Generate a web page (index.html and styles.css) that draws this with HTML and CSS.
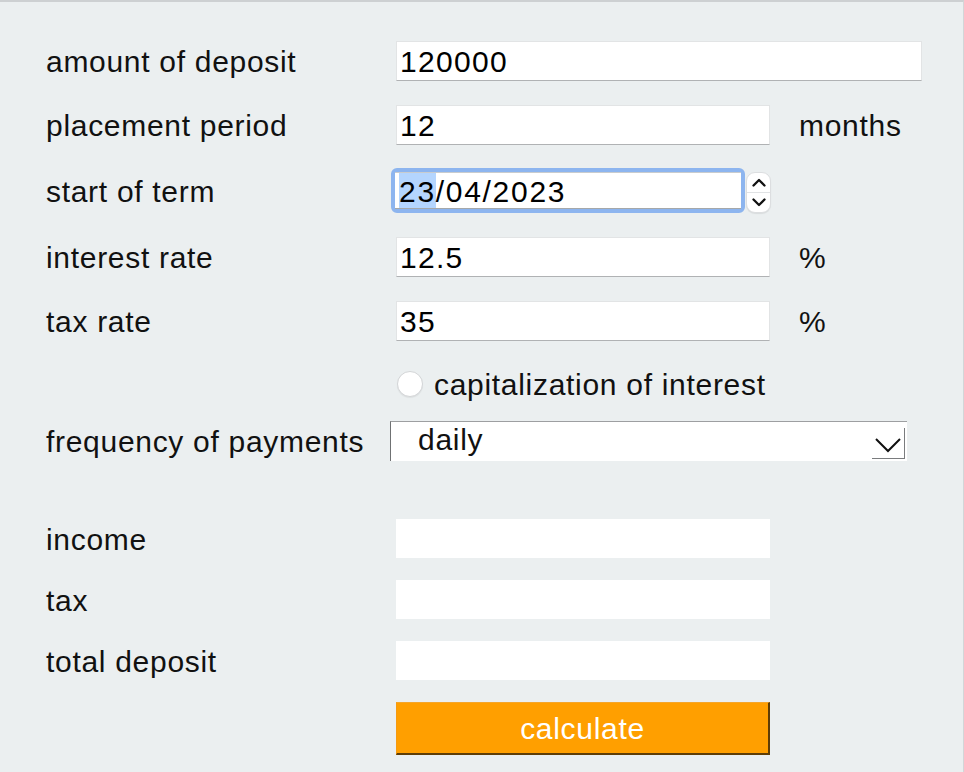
FILE: index.html
```html
<!DOCTYPE html>
<html lang="en">
<head>
<meta charset="utf-8">
<title>Deposit calculator</title>
<link rel="stylesheet" href="styles.css">
</head>
<body>
<main class="calc">
  <div class="row r-first">
    <span class="lbl">amount of deposit</span>
    <input class="field field-wide" type="text" value="120000">
  </div>
  <div class="row r-gap24">
    <span class="lbl">placement period</span>
    <input class="field" type="text" value="12">
    <span class="unit">months</span>
  </div>
  <div class="row r-date">
    <span class="lbl">start of term</span>
    <div class="date-ring">
      <div class="date-box"><span class="sel">23</span>/04/2023</div>
    </div>
    <div class="spinner">
      <svg class="spin-up" width="16" height="11" viewBox="0 0 16 11"><path d="M2.5 8.5 L8 3 L13.5 8.5" fill="none" stroke="#111" stroke-width="2.3" stroke-linecap="round" stroke-linejoin="round"/></svg>
      <svg class="spin-down" width="16" height="11" viewBox="0 0 16 11"><path d="M2.5 2.5 L8 8 L13.5 2.5" fill="none" stroke="#111" stroke-width="2.3" stroke-linecap="round" stroke-linejoin="round"/></svg>
    </div>
  </div>
  <div class="row r-gap24">
    <span class="lbl">interest rate</span>
    <input class="field" type="text" value="12.5">
    <span class="unit">%</span>
  </div>
  <div class="row r-gap24">
    <span class="lbl">tax rate</span>
    <input class="field" type="text" value="35">
    <span class="unit">%</span>
  </div>
  <div class="row r-radio">
    <span class="lbl"></span>
    <span class="radio"></span>
    <span class="radio-text">capitalization of interest</span>
  </div>
  <div class="row r-select">
    <span class="lbl">frequency of payments</span>
    <div class="select">
      <span class="select-text">daily</span>
      <span class="select-arrow">
        <svg width="28" height="18" viewBox="0 0 28 18"><path d="M2 3 L14 15 L26 3" fill="none" stroke="#111" stroke-width="2"/></svg>
      </span>
    </div>
  </div>
  <div class="row r-out-first">
    <span class="lbl">income</span>
    <div class="out"></div>
  </div>
  <div class="row r-out">
    <span class="lbl">tax</span>
    <div class="out"></div>
  </div>
  <div class="row r-out">
    <span class="lbl">total deposit</span>
    <div class="out"></div>
  </div>
  <div class="row r-btn">
    <span class="lbl"></span>
    <button class="btn" type="button">calculate</button>
  </div>
</main>
</body>
</html>
```

FILE: styles.css
```css
html, body {
  margin: 0;
  padding: 0;
  height: 100%;
}
body {
  background: #ebeff0;
  border-top: 2px solid #cdd0d2;
  border-right: 1px solid #d3d6d8;
  box-sizing: border-box;
  font-family: "Liberation Sans", Arial, sans-serif;
  font-size: 30px;
  letter-spacing: 0.7px;
  color: #111;
}
.calc {
  padding: 39px 0 0 46px;
  display: flex;
  flex-direction: column;
}
.row {
  display: flex;
  align-items: center;
  height: 40px;
}
.lbl {
  width: 350px;
  flex: none;
  line-height: 40px;
  padding-top: 2px;
  white-space: nowrap;
}
.r-first { margin-top: 0; }
.r-gap24 { margin-top: 24px; }
.r-date { margin-top: 23px; height: 45px; }
.r-radio { margin-top: 23px; }
.r-select { margin-top: 17px; }
.r-out-first { margin-top: 58px; height: 39px; }
.r-out { margin-top: 22px; height: 39px; }
.r-btn { margin-top: 22px; height: 53px; }

.field {
  box-sizing: border-box;
  width: 374px;
  height: 40px;
  margin: 0;
  padding: 2px 0 0 3px;
  border: 1px solid #e2e4e5;
  border-bottom-color: #b0b2b4;
  background: #fff;
  font-family: inherit;
  font-size: 30px;
  letter-spacing: 1.3px;
  color: #000;
  outline: none;
}
.field-wide { width: 526px; }
.unit {
  margin-left: 29px;
  line-height: 40px;
  padding-top: 2px;
}

.date-ring {
  box-sizing: border-box;
  margin-left: -5px;
  width: 354px;
  height: 45px;
  border: 4px solid #8db5ef;
  border-radius: 6px;
  background: #8db5ef;
  display: flex;
}
.date-box {
  flex: 1;
  background: #fff;
  border-top: 1px solid #c9ccce;
  border-bottom: 1px solid #a5a8aa;
  padding: 2px 0 0 4px;
  line-height: 33px;
  color: #000;
  letter-spacing: 1.7px;
}
.sel {
  background: #b4d5fe;
  display: inline-block;
  line-height: 33px;
  margin-top: -2px;
  padding-top: 2px;
  vertical-align: top;
}
.spinner {
  box-sizing: border-box;
  margin-left: 1px;
  margin-top: 4px;
  width: 25px;
  height: 41px;
  background: #fff;
  border: 1px solid #dcdee0;
  border-radius: 9px;
  display: flex;
  flex-direction: column;
  align-items: center;
  justify-content: space-around;
  box-shadow: 0 1px 1px rgba(0,0,0,0.08);
  position: relative;
}
.spinner::after {
  content: "";
  position: absolute;
  left: 0;
  right: 0;
  top: 19px;
  height: 1px;
  background: #e0e2e4;
}

.radio {
  box-sizing: border-box;
  width: 26px;
  height: 26px;
  margin-left: 1px;
  border-radius: 50%;
  background: #fff;
  border: 1px solid #d3d5d7;
  box-shadow: 0 1px 1px rgba(0,0,0,0.06);
  flex: none;
}
.radio-text {
  margin-left: 11px;
  line-height: 40px;
  padding-top: 2px;
}

.select {
  box-sizing: border-box;
  margin-left: -6px;
  width: 517px;
  height: 40px;
  background: #fff;
  border-top: 1px solid #9d9fa1;
  border-left: 1px solid #6f7173;
  display: flex;
  align-items: center;
}
.select-text {
  flex: 1;
  padding-left: 27px;
  line-height: 36px;
  margin-top: -4px;
}
.select-arrow {
  box-sizing: border-box;
  width: 33px;
  height: 31px;
  margin-right: 2px;
  margin-top: 3px;
  border-right: 1px solid #7a7c7e;
  border-bottom: 1px solid #7a7c7e;
  display: flex;
  align-items: center;
  justify-content: center;
}
.select-arrow svg { margin-top: 4px; }

.out {
  width: 374px;
  height: 39px;
  background: #fff;
}

.btn {
  box-sizing: border-box;
  width: 374px;
  height: 53px;
  margin: 0;
  padding: 2px 0 0 0;
  background: #ff9f00;
  border-top: 1px solid #f5a52a;
  border-left: 1px solid #f59a10;
  border-right: 2px solid #5e3d06;
  border-bottom: 2px solid #5e3d06;
  color: #fff;
  font-family: inherit;
  font-size: 30px;
  letter-spacing: 0.7px;
  cursor: pointer;
}
```
